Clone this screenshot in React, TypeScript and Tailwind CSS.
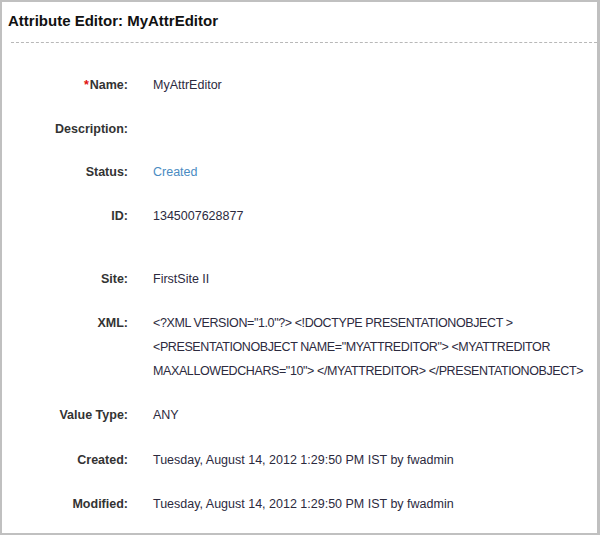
const font = { fontFamily: '"Liberation Sans", Arial, sans-serif' };

type Row = { label: string; value?: React.ReactNode; required?: boolean; pb?: string };

const stamp = 'Tuesday, August 14, 2012 1:29:50 PM IST by fwadmin';

const rows: Row[] = [
  { label: 'Name:', value: 'MyAttrEditor', required: true },
  { label: 'Description:' },
  { label: 'Status:', value: <span className="text-[#4a8bc2]">Created</span> },
  { label: 'ID:', value: '1345007628877', pb: 'pb-[29.5px]' },
  { label: 'Site:', value: 'FirstSite II' },
  {
    label: 'XML:',
    value: (
      <span className="tracking-[-0.4px]">
        {'<?XML VERSION="1.0"?> <!DOCTYPE PRESENTATIONOBJECT > <PRESENTATIONOBJECT NAME="MYATTREDITOR"> <MYATTREDITOR MAXALLOWEDCHARS="10"> </MYATTREDITOR> </PRESENTATIONOBJECT>'}
      </span>
    ),
    pb: 'pb-[10.5px]',
  },
  { label: 'Value Type:', value: 'ANY', pb: 'pb-[11px]' },
  { label: 'Created:', value: stamp },
  { label: 'Modified:', value: stamp },
];

export default function App() {
  return (
    <div
      className="w-[600px] h-[535px] bg-white border-2 border-r-[3px] border-[#c0c0c0] overflow-hidden"
      style={font}
    >
      {/* header */}
      <div className="pl-[6px] pt-[9px] leading-[20px] text-[15px] font-bold text-[#111]">
        Attribute Editor: MyAttrEditor
      </div>
      <div className="ml-[9px] mt-[11px] border-t border-dashed border-[#b8b8b8]" />

      {/* details */}
      <div className="mt-[20px] text-[12.5px]">
        {rows.map((r) => (
          <div key={r.label} className={`flex pt-[10px] leading-6 ${r.pb ?? 'pb-[9.5px]'}`}>
            <div className="w-[126px] shrink-0 text-right font-bold text-[#333]">
              {r.required && <span className="text-[#e01010] font-bold mr-[1px]">*</span>}
              {r.label}
            </div>
            <div className="ml-[25px] pr-[4px] text-[#2c2a3e] min-h-6">{r.value}</div>
          </div>
        ))}
      </div>
    </div>
  );
}
